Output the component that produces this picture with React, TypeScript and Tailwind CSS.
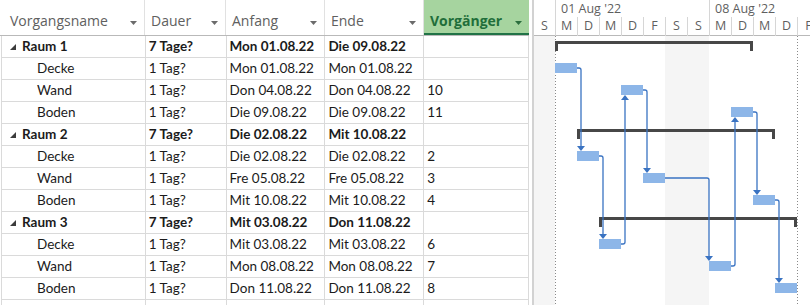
import React from 'react'

type Row = {
  name: string
  sum?: boolean
  dur: string
  start: string
  end: string
  pred: string
}

const rows: Row[] = [
  { name: 'Raum 1', sum: true, dur: '7 Tage?', start: 'Mon 01.08.22', end: 'Die 09.08.22', pred: '' },
  { name: 'Decke', dur: '1 Tag?', start: 'Mon 01.08.22', end: 'Mon 01.08.22', pred: '' },
  { name: 'Wand', dur: '1 Tag?', start: 'Don 04.08.22', end: 'Don 04.08.22', pred: '10' },
  { name: 'Boden', dur: '1 Tag?', start: 'Die 09.08.22', end: 'Die 09.08.22', pred: '11' },
  { name: 'Raum 2', sum: true, dur: '7 Tage?', start: 'Die 02.08.22', end: 'Mit 10.08.22', pred: '' },
  { name: 'Decke', dur: '1 Tag?', start: 'Die 02.08.22', end: 'Die 02.08.22', pred: '2' },
  { name: 'Wand', dur: '1 Tag?', start: 'Fre 05.08.22', end: 'Fre 05.08.22', pred: '3' },
  { name: 'Boden', dur: '1 Tag?', start: 'Mit 10.08.22', end: 'Mit 10.08.22', pred: '4' },
  { name: 'Raum 3', sum: true, dur: '7 Tage?', start: 'Mit 03.08.22', end: 'Don 11.08.22', pred: '' },
  { name: 'Decke', dur: '1 Tag?', start: 'Mit 03.08.22', end: 'Mit 03.08.22', pred: '6' },
  { name: 'Wand', dur: '1 Tag?', start: 'Mon 08.08.22', end: 'Mon 08.08.22', pred: '7' },
  { name: 'Boden', dur: '1 Tag?', start: 'Don 11.08.22', end: 'Don 11.08.22', pred: '8' },
]

// gantt drawing works in page coordinates, shifted by the chart origin
const OX = 534
const OY = 36

const bars = [
  [555, 63], [621, 85], [731, 107],
  [577, 151], [643, 173], [753, 195],
  [599, 239], [709, 261], [775, 283],
]

const summaries = [
  [555, 753, 41],
  [577, 775, 129],
  [599, 797, 217],
]

// [fromX, fromY, turnX, toY]
const links = [
  [577, 68, 581, 151],
  [643, 90, 647, 173],
  [753, 112, 757, 195],
  [599, 156, 603, 239],
  [665, 178, 709, 261],
  [775, 200, 779, 283],
  [621, 244, 625, 95],
  [731, 266, 735, 117],
]

const days = ['M', 'D', 'M', 'D', 'F', 'S', 'S', 'M', 'D', 'M', 'D', 'F']

function Caret({ color = '#6b6b6b' }: { color?: string }) {
  return (
    <svg width="7" height="4" viewBox="0 0 7 4" className="shrink-0">
      <polygon points="0,0 7,0 3.5,4" fill={color} />
    </svg>
  )
}

function HeadCell({ label, w }: { label: string; w: string }) {
  return (
    <div className={`${w} flex items-end justify-between border-r border-[#e1e1e1] pl-[6px] pr-[7px] pb-[5px]`}>
      <span className="leading-[18px]">{label}</span>
      <span className="mb-[5px]">
        <Caret />
      </span>
    </div>
  )
}

function Gantt() {
  const blue = '#3a73c2'
  return (
    <svg width="276" height="269" className="block">
      <rect x={0} y={0} width={21} height={269} fill="#f5f5f5" />
      <rect x={665 - OX} y={0} width={44} height={269} fill="#f5f5f5" />
      <line x1={21.5} y1={0} x2={21.5} y2={269} stroke="#8a8a8a" strokeDasharray="1 2" />
      <line x1={263.5} y1={0} x2={263.5} y2={269} stroke="#8a8a8a" strokeDasharray="1 2" />

      {summaries.map(([a, b, y], i) => (
        <g key={i} fill="#474747">
          <rect x={a - OX} y={y - OY} width={b - a} height={3} />
          <rect x={a - OX} y={y - OY} width={3} height={10} />
          <rect x={b - OX - 3} y={y - OY} width={3} height={10} />
        </g>
      ))}

      {links.map(([x0, y0, xc, yt], i) => {
        const up = yt < y0
        const a = x0 - OX
        const b = y0 - OY
        const c = xc - OX
        const t = yt - OY
        const d = up
          ? `M${a},${b} H${c - 2} Q${c},${b} ${c},${b - 2} V${t + 4}`
          : `M${a},${b} H${c - 2} Q${c},${b} ${c},${b + 2} V${t - 4}`
        const pts = up
          ? `${c - 4},${t + 5} ${c + 4},${t + 5} ${c},${t}`
          : `${c - 4},${t - 5} ${c + 4},${t - 5} ${c},${t}`
        return (
          <g key={i}>
            <path d={d} fill="none" stroke={blue} strokeWidth={1.3} />
            <polygon points={pts} fill={blue} />
          </g>
        )
      })}

      {bars.map(([x, y], i) => (
        <rect key={i} x={x - OX} y={y - OY} width={22} height={10} fill="#8db6e8" />
      ))}
    </svg>
  )
}

export default function App() {
  return (
    <div className="w-[810px] h-[305px] overflow-hidden bg-white flex text-[#1b1b1b] font-['Lato',sans-serif] text-[13.5px]">
      <div className="w-[529px] shrink-0 flex flex-col">
        <div className="h-[36px] shrink-0 flex border-b border-[#b9b9b9] text-[#606060] font-['Open_Sans',sans-serif] text-[14px]">
          <HeadCell label="Vorgangsname" w="w-[145px] pl-[10px]" />
          <HeadCell label="Dauer" w="w-[81px]" />
          <HeadCell label="Anfang" w="w-[99px]" />
          <HeadCell label="Ende" w="w-[99px]" />
          <div className="w-[105px] flex items-end justify-between bg-[#a6d49f] border-b-2 border-[#217346] pl-[6px] pr-[7px] pb-[3px]">
            <span className="leading-[18px] font-bold text-[#1f6e3a]">Vorgänger</span>
            <span className="mb-[5px]">
              <Caret color="#2c6e3e" />
            </span>
          </div>
        </div>
        <div className="ml-[1px] border-l border-[#dadada] flex flex-col">
          {[...rows, null].map((r, i) => (
            <div key={i} className={`h-[22px] shrink-0 flex border-b border-[#dadada] ${r?.sum ? 'font-bold' : ''}`}>
              <div className="w-[144px] flex items-center border-r border-[#dadada]">
                {r?.sum && (
                  <svg width="6" height="6" viewBox="0 0 6 6" className="ml-[8px] mr-[6px] mt-[1px]">
                    <polygon points="6,0 6,6 0,6" fill="#3c3c3c" />
                  </svg>
                )}
                {r && !r.sum && <span className="w-[35px]" />}
                <span>{r?.name}</span>
              </div>
              <div className="w-[81px] flex items-center pl-[3px] border-r border-[#dadada]">{r?.dur}</div>
              <div className="w-[99px] flex items-center pl-[3px] border-r border-[#dadada]">{r?.start}</div>
              <div className="w-[99px] flex items-center pl-[3px] border-r border-[#dadada]">{r?.end}</div>
              <div className="w-[105px] flex items-center pl-[3px] border-r border-[#dadada]">{r?.pred}</div>
            </div>
          ))}
        </div>
      </div>

      <div className="w-[5px] shrink-0 border-r-2 border-[#d2d2d2]" />

      <div className="flex-1 flex flex-col overflow-hidden font-['Open_Sans',sans-serif] text-[12.5px] text-[#5f5f5f]">
        <div className="h-[36px] shrink-0 flex flex-col border-b border-[#b9b9b9]">
          <div className="h-[17px] flex">
            <div className="w-[21px] shrink-0" />
            <div className="w-[154px] shrink-0 border-l border-[#d6d6d6] pl-[5px] leading-[17px]">01 Aug '22</div>
            <div className="w-[154px] shrink-0 border-l border-[#d6d6d6] pl-[5px] leading-[17px]">08 Aug '22</div>
          </div>
          <div className="flex-1 flex">
            <div className="w-[21px] shrink-0 flex items-center justify-center">S</div>
            {days.map((d, i) => (
              <div key={i} className="w-[22px] shrink-0 flex items-center justify-center border-l border-[#d6d6d6]">
                {d}
              </div>
            ))}
          </div>
        </div>
        <Gantt />
      </div>
    </div>
  )
}
